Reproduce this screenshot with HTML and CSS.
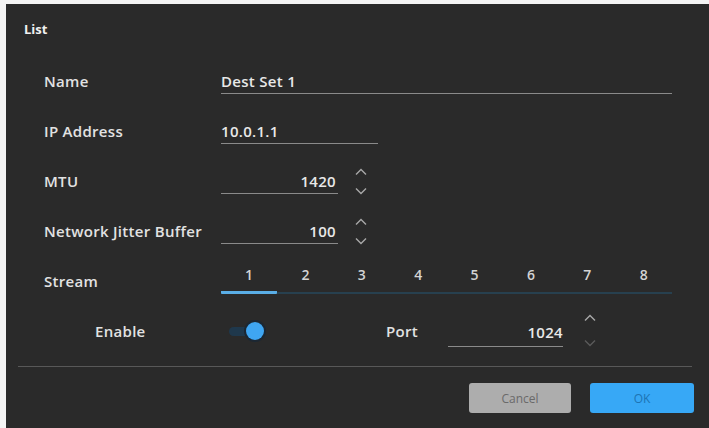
FILE: index.html
```html
<!DOCTYPE html>
<html>
<head>
    <title>List</title>
    <link rel="stylesheet" href="styles.css">
</head>
<body>
    <div class="dialog">
        <div class="title">List</div>

        <div class="form">
            <div class="row">
                <span class="label">Name</span>
                <span class="field name-field">Dest Set 1</span>
            </div>

            <div class="row">
                <span class="label">IP Address</span>
                <span class="field ip-field">10.0.1.1</span>
            </div>

            <div class="row">
                <span class="label">MTU</span>
                <span class="field num-field">1420</span>
                <span class="spinner">
                    <svg width="12" height="8" viewBox="0 0 12 8"><path d="M1 6.5 L6 1.5 L11 6.5" /></svg>
                    <svg width="12" height="8" viewBox="0 0 12 8"><path d="M1 1.5 L6 6.5 L11 1.5" /></svg>
                </span>
            </div>

            <div class="row">
                <span class="label">Network Jitter Buffer</span>
                <span class="field num-field">100</span>
                <span class="spinner">
                    <svg width="12" height="8" viewBox="0 0 12 8"><path d="M1 6.5 L6 1.5 L11 6.5" /></svg>
                    <svg width="12" height="8" viewBox="0 0 12 8"><path d="M1 1.5 L6 6.5 L11 1.5" /></svg>
                </span>
            </div>

            <div class="row">
                <span class="label">Stream</span>
                <div class="tabs">
                    <span class="tab active">1</span>
                    <span class="tab">2</span>
                    <span class="tab">3</span>
                    <span class="tab">4</span>
                    <span class="tab">5</span>
                    <span class="tab">6</span>
                    <span class="tab">7</span>
                    <span class="tab">8</span>
                </div>
            </div>

            <div class="row">
                <span class="label sub-label">Enable</span>
                <div class="toggle-cell">
                    <span class="toggle"><span class="knob"></span></span>
                </div>
                <span class="port-label">Port</span>
                <span class="field port-field">1024</span>
                <span class="spinner port-spinner">
                    <svg width="12" height="8" viewBox="0 0 12 8"><path d="M1 6.5 L6 1.5 L11 6.5" /></svg>
                    <svg class="dim" width="12" height="8" viewBox="0 0 12 8"><path d="M1 1.5 L6 6.5 L11 1.5" /></svg>
                </span>
            </div>
        </div>

        <div class="separator"></div>

        <div class="footer">
            <button class="btn btn-cancel">Cancel</button>
            <button class="btn btn-ok">OK</button>
        </div>
    </div>
</body>
</html>
```

FILE: styles.css
```css
html, body {
    margin: 0;
    padding: 0;
    background-color: #f4f4f4;
    height: 100%;
    overflow: hidden;
}

body {
    font-family: "Open Sans", "Noto Sans", sans-serif;
    font-size: 15px;
    letter-spacing: 0.3px;
    color: #e2e2e2;
}

.dialog {
    margin: 4px 0 0 6px;
    height: 424px;
    background-color: #2a2a2a;
    box-sizing: border-box;
    padding-top: 16px;
}

.title {
    padding-left: 18px;
    line-height: 18px;
    font-size: 13px;
    letter-spacing: 0;
    font-weight: 700;
    color: #f0f0f0;
}

.form {
    margin-top: 18px;
}

.row {
    display: flex;
    align-items: center;
    height: 50px;
    padding-left: 38px;
}

.label {
    width: 177px;
    flex-shrink: 0;
    font-weight: 600;
}

.sub-label {
    padding-left: 51px;
    box-sizing: border-box;
}

.field {
    display: block;
    box-sizing: border-box;
    height: 25px;
    line-height: 24px;
    border-bottom: 1px solid #8a8a8a;
    font-weight: 600;
    color: #e8e8e8;
}

.name-field {
    width: 451px;
}

.ip-field {
    width: 157px;
}

.num-field {
    width: 117px;
    text-align: right;
    padding-right: 2px;
}

.spinner {
    display: flex;
    flex-direction: column;
    gap: 11px;
    margin-left: 17px;
}

.spinner svg {
    display: block;
}

.spinner path {
    fill: none;
    stroke: #a8a8a8;
    stroke-width: 1.4;
}

.spinner svg.dim path {
    stroke: #5a5a5a;
}

.tabs {
    display: flex;
    width: 451px;
    margin-top: -2px;
    box-shadow: inset 0 -2px 0 #27404f;
}

.tab {
    flex: 1;
    text-align: center;
    line-height: 18px;
    padding-bottom: 7px;
    border-bottom: 3px solid transparent;
    font-size: 14px;
    font-weight: 600;
    color: #d4d4d4;
}

.tab.active {
    border-bottom-color: #5aaee6;
    border-radius: 0 0 1px 1px;
}

.toggle-cell {
    width: 165px;
    flex-shrink: 0;
    display: flex;
    align-items: center;
}

.toggle {
    position: relative;
    display: block;
    width: 26px;
    height: 9px;
    margin-left: 8px;
    border-radius: 5px;
    background-color: #1f384c;
}

.knob {
    position: absolute;
    top: -5px;
    right: -9px;
    width: 18px;
    height: 18px;
    border-radius: 50%;
    background-color: #3fa6f2;
    box-shadow: 0 0 0 2px #1b2733;
}

.port-label {
    width: 62px;
    flex-shrink: 0;
    font-weight: 600;
}

.port-field {
    width: 115px;
    text-align: right;
    margin-top: 4px;
    height: 27px;
}

.port-spinner {
    margin-left: 21px;
    gap: 17px;
    margin-top: -2px;
}

.separator {
    margin: 10px 17px 0 12px;
    height: 1px;
    background-color: #585858;
}

.footer {
    display: flex;
    justify-content: flex-end;
    gap: 19px;
    padding: 16px 15px 0 0;
}

.btn {
    height: 30px;
    border: none;
    border-radius: 3px;
    font-family: "Open Sans", "Noto Sans", sans-serif;
    font-size: 12px;
    letter-spacing: 0;
    cursor: pointer;
}

.btn-cancel {
    width: 102px;
    background-color: #adadad;
    color: #6a6a6a;
}

.btn-ok {
    width: 104px;
    background-color: #37a8f6;
    color: #1d74b4;
}
```
